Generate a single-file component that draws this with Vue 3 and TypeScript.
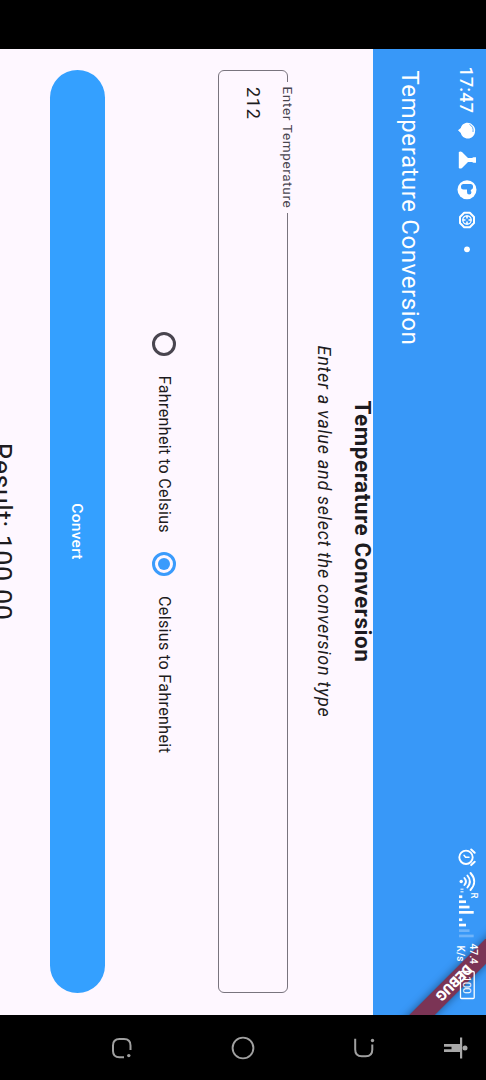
<script setup lang="ts">
import { ref } from 'vue'

type Mode = 'f2c' | 'c2f'
const options: { id: Mode; label: string }[] = [
  { id: 'f2c', label: 'Fahrenheit to Celsius' },
  { id: 'c2f', label: 'Celsius to Fahrenheit' },
]
const mode = ref<Mode>('c2f')
const value = ref('212')
const result = ref('100.00')
</script>

<template>
  <div class="viewport">
    <div class="device">
      <div class="cutout"></div>
      <main class="app">
        <header class="top">
          <div class="status">
            <span class="time">17:47</span>
            <svg class="left-icons" width="138" height="38" viewBox="118 0 138 38">
              <g fill="#fff">
                <path d="M125 13.500c1.500-2 4-3.200 7-2.500c4 .500 6.500 3.500 6.500 7c0 4-2.500 6.500-5.500 7.200L130.300 28L128 25.200c-3-.700-5.300-3.200-5.300-6.700c0-2 .800-3.700 2.300-5Z" />
                <path d="M157.200 10h5.600v2.500l-.800 1.500v4l6 6c.800 1 .800 2.200 0 3.200h-16c-.800-1-.800-2.200 0-3.200l6-6v-4l-.800-1.500Z" />
                <circle cx="189.700" cy="19" r="9.500" />
                <circle cx="249.300" cy="19" r="2.900" />
              </g>
              <path d="M124.500 16.500c1.500-3 4-4 7.500-3.500" fill="none" stroke="#3898f8" stroke-width=".8" />
              <rect x="184" y="13" width="5.500" height="12" rx="2.500" fill="#3898f8" />
              <path d="M188 14.500h4q2.500 0 2.500 2.300t-2.500 2.200h-4Z" fill="#3898f8" />
              <circle cx="190.800" cy="14.300" r="1" fill="#fff" />
              <g fill="none" stroke="#fff">
                <path d="M217 12h6l4.300 4.200v5.600L223 26h-6l-4.300-4.200v-5.600Z" stroke-width="2" stroke-linejoin="round" />
                <circle cx="220" cy="19" r="4.200" stroke-width="1.300" />
                <path d="M220 14.500v3M220 20.500v3M215.500 19h3M221.500 19h3" stroke-width="1.600" />
              </g>
            </svg>
            <svg class="right-icons" width="160" height="38" viewBox="846 0 160 38">
              <g fill="none" stroke="#fff" stroke-linecap="round">
                <circle cx="857.300" cy="20" r="6.700" stroke-width="1.900" />
                <path d="M849.500 14.800l3.300-3.500M865.100 14.800l-3.300-3.500" stroke-width="2" />
                <path d="M857.300 17v3.400l-2 1.600" stroke-width="1.500" />
                <path d="M873 15.500q8.500-7.500 17 0M875.500 18.600q6-5 12 0M878 21.600q3.500-3 7 0" stroke-width="1.900" />
              </g>
              <g fill="#fff">
                <circle cx="881.500" cy="24.800" r="1.700" />
                <rect x="888.500" y="22.500" width="1.500" height="3" opacity=".7" />
                <rect x="891" y="22.500" width="1.500" height="3" opacity=".7" />
                <rect x="895.400" y="23.700" width="2.700" height="3.300" />
                <rect x="900.400" y="20" width="2.700" height="7" />
                <rect x="905.700" y="16.500" width="2.700" height="10.500" />
                <rect x="911" y="12.300" width="2.700" height="14.700" />
                <rect x="918.400" y="23.700" width="2.700" height="3.300" />
                <rect x="923.700" y="20" width="2.700" height="7" />
                <rect x="929.300" y="16.500" width="2.700" height="10.500" opacity=".28" />
                <rect x="934.600" y="12.300" width="2.700" height="14.700" opacity=".28" />
              </g>
              <g class="tiny">
                <text x="892.500" y="15.500" font-size="9.500">R</text>
                <text x="943.500" y="16" font-size="10.500" textLength="20.500">47.4</text>
                <text x="945.500" y="29" font-size="10" textLength="16">K/s</text>
                <text class="thin" x="976" y="23" font-size="11.500" textLength="18">100</text>
              </g>
              <rect x="971.500" y="11.800" width="27" height="13.700" rx="1" fill="none" stroke="#fff" stroke-width="1.300" />
            </svg>
          </div>
          <h1 class="title">Temperature Conversion</h1>
        </header>

        <section class="body">
          <h2 class="heading">Temperature Conversion</h2>
          <p class="sub">Enter a value and select the conversion type</p>
          <fieldset class="field">
            <legend>Enter Temperature</legend>
            <span class="value">{{ value }}</span>
          </fieldset>
          <div class="radios">
            <div v-for="o in options" :key="o.id" class="option" @click="mode = o.id">
              <span class="radio" :class="{ on: mode === o.id }"></span>
              <span class="label">{{ o.label }}</span>
            </div>
          </div>
          <button class="convert" type="button">Convert</button>
          <p class="result">Result: {{ result }}</p>
        </section>

        <div class="banner"><span>DEBUG</span></div>
      </main>
      <nav class="nav">
        <svg viewBox="0 0 26 26">
          <g fill="#a8a8a8">
            <circle cx="13" cy="4" r="2.500" />
            <path d="M2.500 6.800h21v2.200H17V25h-2.800v-7.500h-2.400V25H9V9H2.500Z" />
          </g>
        </svg>
        <svg viewBox="0 0 26 26">
          <path d="M9.500 4.700h5q6.800 0 6.800 6.500v4q0 6.600-6.800 6.600H3.800" fill="none" stroke="#a0a0a0" stroke-width="2" />
          <circle cx="5.500" cy="4.500" r="1.700" fill="#a0a0a0" />
        </svg>
        <svg viewBox="0 0 26 26">
          <circle cx="13" cy="13" r="10.400" fill="none" stroke="#a0a0a0" stroke-width="1.900" />
        </svg>
        <svg viewBox="0 0 26 26">
          <path d="M15 4.500H10.500q-6.500 0-6.500 6.500v4.500q0 6.500 6.500 6.500h5.500q6.300 0 6.300-6.500V11" fill="none" stroke="#a0a0a0" stroke-width="2" />
          <circle cx="20.600" cy="6.200" r="1.700" fill="#a0a0a0" />
        </svg>
      </nav>
    </div>
  </div>
</template>

<style>
body {
  margin: 0;
  background: #000;
}
</style>

<style scoped>
.viewport {
  width: 486px;
  height: 1080px;
  overflow: hidden;
}
.device {
  width: 1080px;
  height: 486px;
  display: flex;
  overflow: hidden;
  background: #000;
  font-family: Roboto, "Liberation Sans", sans-serif;
  transform-origin: 0 0;
  transform: translateX(486px) rotate(90deg);
}
.cutout {
  width: 48.5px;
  flex: none;
}
.app {
  position: relative;
  width: 966.5px;
  flex: none;
  height: 486px;
  overflow: hidden;
  background: #fef7ff;
}
.top {
  height: 113px;
  background: #3898f8;
  color: #fff;
}
.status {
  position: relative;
  z-index: 2;
  display: flex;
  height: 38px;
  padding: 0 9px 0 18px;
}
.time {
  width: 51.5px;
  font-size: 18px;
  font-weight: 500;
  line-height: 40px;
  letter-spacing: 0.2px;
}
.right-icons {
  margin-left: auto;
}
.tiny text {
  fill: #fff;
  font-weight: 500;
}
.tiny .thin {
  font-weight: 400;
}
.title {
  margin: 14px 0 0 22px;
  font-size: 24px;
  font-weight: 400;
  line-height: 48px;
  letter-spacing: 0.6px;
}
.body {
  display: flex;
  flex-direction: column;
  padding: 0 22px 0 21.500px;
  color: #1d1b20;
}
.heading {
  margin: -3px 0 0;
  font-size: 22.500px;
  font-weight: 700;
  line-height: 26px;
  text-align: center;
  letter-spacing: 0.55px;
}
.sub {
  margin: 15px 0 0;
  font-size: 18px;
  font-style: italic;
  line-height: 22px;
  text-align: center;
  letter-spacing: 0.72px;
}
.field {
  box-sizing: border-box;
  height: 78px;
  min-width: 0;
  margin: 17px 0 0;
  padding: 0 16px;
  border: 1px solid #79747e;
  border-radius: 6px;
}
.field legend {
  margin-left: -5.500px;
  padding: 0 5px;
  color: #49454f;
  font-size: 13.500px;
  line-height: 16px;
  letter-spacing: 0.66px;
}
.value {
  display: block;
  margin-top: 15px;
  font-size: 18px;
  line-height: 24px;
  letter-spacing: 0.7px;
}
.radios {
  display: flex;
  justify-content: center;
  margin-top: 40px;
  padding-left: 22px;
  height: 28px;
}
.option {
  display: flex;
  align-items: center;
}
.option + .option {
  margin-left: 19px;
}
.radio {
  box-sizing: border-box;
  display: grid;
  place-items: center;
  width: 24px;
  height: 24px;
  margin-right: 20px;
  border: 3px solid #49454f;
  border-radius: 50%;
}
.radio.on {
  border-color: #3a9bfc;
}
.radio.on::after {
  content: "";
  width: 12px;
  height: 12px;
  border-radius: 50%;
  background: #3a9bfc;
}
.label {
  font-size: 16px;
  line-height: 28px;
  letter-spacing: 0.38px;
}
.convert {
  height: 55px;
  margin: 45px 0 0;
  border: 0;
  border-radius: 28px;
  background: #34a0ff;
  color: #fff;
  font: 500 15.500px/55px Roboto, sans-serif;
  letter-spacing: 0.3px;
}
.result {
  margin: 32px 0 0;
  font-size: 27px;
  line-height: 34px;
  text-align: center;
  white-space: nowrap;
  letter-spacing: 0.45px;
}
.banner {
  position: absolute;
  z-index: 1;
  top: 22.500px;
  right: -68px;
  width: 200px;
  height: 18px;
  transform: rotate(45deg);
  background: rgba(132, 38, 62, 0.88);
  box-shadow: 0 0 8px rgba(0, 0, 0, 0.45);
  color: #fff;
  font-size: 14px;
  font-weight: 900;
  line-height: 18px;
  text-align: center;
}
.nav {
  display: flex;
  flex-direction: column;
  align-items: center;
  width: 65px;
  gap: 95px;
  padding-top: 17px;
}
.nav svg {
  flex: none;
  width: 26px;
  height: 26px;
}
.nav svg:first-child {
  margin-bottom: -29px;
}
</style>
